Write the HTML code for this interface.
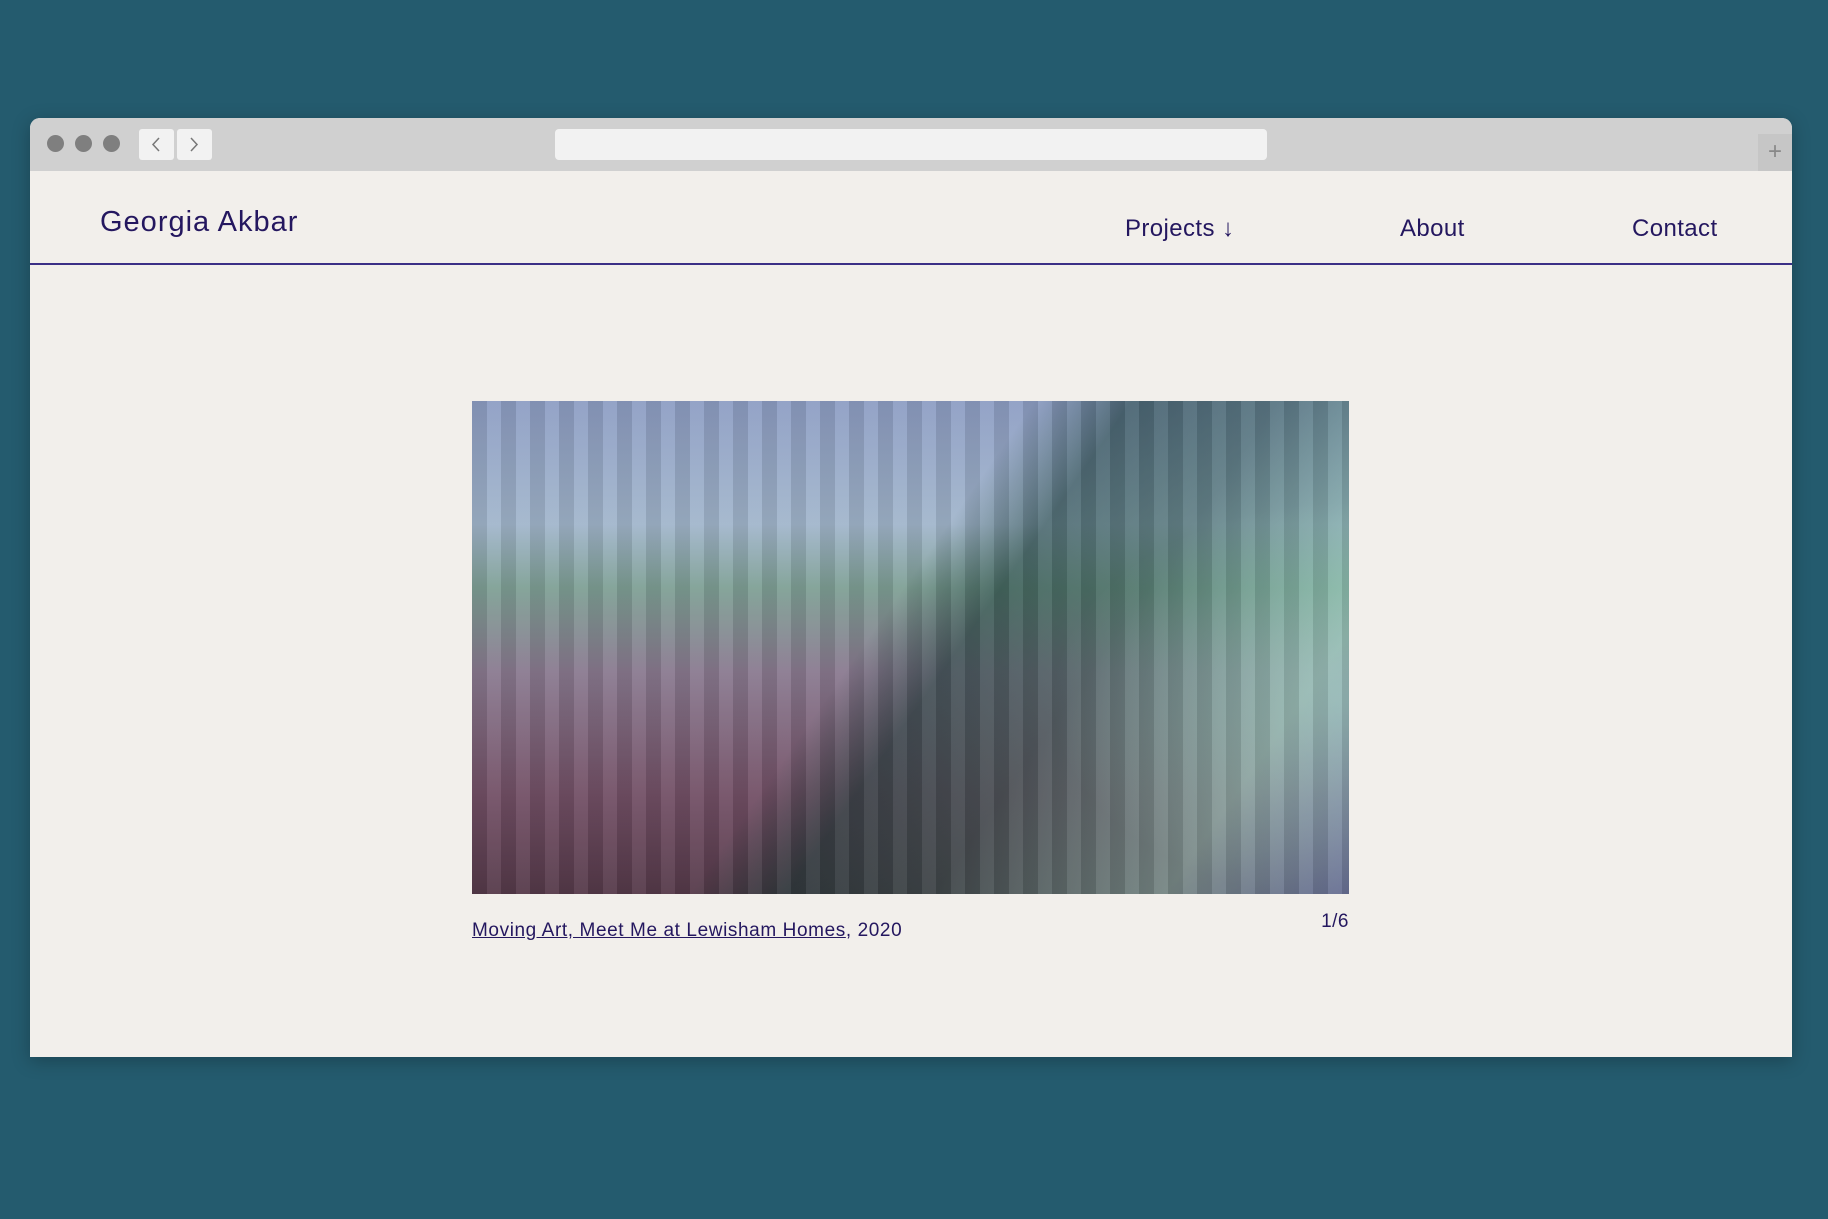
<!DOCTYPE html>
<html><head><meta charset="utf-8"><style>
*{margin:0;padding:0;box-sizing:border-box}
body{width:1828px;height:1219px;background:#245b6e;position:relative;overflow:hidden;font-family:"Liberation Sans",sans-serif;color:#24175f}
.win{position:absolute;left:30px;top:118px;width:1762px;height:939px;background:#f2efeb;border-radius:10px 10px 0 0;overflow:hidden;box-shadow:0 4px 18px rgba(0,0,0,.25)}
.bar{position:absolute;left:0;top:0;width:100%;height:53px;background:#d0d0d0}
.dot{position:absolute;top:17px;width:17px;height:17px;border-radius:50%;background:#7f7f7f}
.btn{position:absolute;top:11px;height:31px;width:35px;background:#f2f2f2;border-radius:3px}
.addr{position:absolute;left:525px;top:11px;width:712px;height:31px;background:#f2f2f2;border-radius:4px}
.plus{position:absolute;right:0;top:16px;width:34px;height:37px;background:#c6c6c6;color:#888;font-size:24px;text-align:center;line-height:36px}
.name{position:absolute;left:70px;top:88px;font-size:29px;letter-spacing:1px}
.nav{position:absolute;top:97px;font-size:24px;letter-spacing:.4px}
.line{position:absolute;left:0;top:145px;width:100%;height:2px;background:#3b2f86}
.img{position:absolute;left:442px;top:283px;width:877px;height:493px;
background:
repeating-linear-gradient(90deg,rgba(0,0,0,.09) 0 15px,rgba(255,255,255,.05) 15px 29px),
radial-gradient(ellipse 300px 200px at 880px 300px,rgba(170,230,210,.4),rgba(0,0,0,0)),
linear-gradient(125deg,rgba(0,0,0,0) 46%,rgba(20,55,50,.55) 54%,rgba(40,80,70,.5) 66%,rgba(150,210,190,.5) 85%,rgba(120,160,220,.5) 100%),
linear-gradient(180deg,#8e9ec4 0%,#a2b6cc 25%,#7fa095 38%,#8a7a90 55%,#735066 80%,#563a4a 100%);}
.cap{position:absolute;left:442px;top:802px;font-size:19px;letter-spacing:.6px}
.cap a{color:#24175f;text-decoration:underline}
.num{position:absolute;right:443px;top:793px;font-size:19px;letter-spacing:.5px}
</style></head><body>
<div class="win">
<div class="bar">
<div class="dot" style="left:17px"></div><div class="dot" style="left:45px"></div><div class="dot" style="left:73px"></div>
<div class="btn" style="left:109px"><svg width="35" height="31"><path d="M20 9 L14 15.5 L20 22" fill="none" stroke="#777" stroke-width="1.5"/></svg></div>
<div class="btn" style="left:147px"><svg width="35" height="31"><path d="M14 9 L20 15.5 L14 22" fill="none" stroke="#777" stroke-width="1.5"/></svg></div>
<div class="addr"></div>
<div class="plus">+</div>
</div>
<div class="name">Georgia Akbar</div>
<div class="nav" style="left:1095px">Projects ↓</div>
<div class="nav" style="left:1370px">About</div>
<div class="nav" style="left:1602px">Contact</div>
<div class="line"></div>
<div class="img"></div>
<div class="cap"><a>Moving Art, Meet Me at Lewisham Homes</a>, 2020</div>
<div class="num">1/6</div>
</div>
</body></html>
